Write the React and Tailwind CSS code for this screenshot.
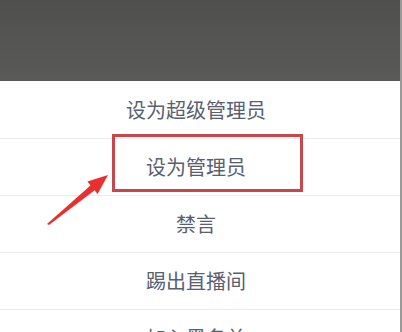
import React from 'react';

const ITEMS = ['设为超级管理员', '设为管理员', '禁言', '踢出直播间', '加入黑名单'];

export default function App() {
  return (
    <div
      className="relative w-[402px] h-[332px] overflow-hidden flex bg-[#9a9b98]"
      style={{ fontFamily: '"Noto Sans CJK SC", "Noto Sans", sans-serif' }}
    >
      <div className="w-[400px] flex flex-col">
        {/* dimmed backdrop */}
        <div className="h-[81px] shrink-0 bg-gradient-to-b from-[#4f504d] to-[#5a5b58]" />

        {/* action sheet */}
        <div className="flex-1 bg-white flex flex-col">
          {ITEMS.map((label, i) => (
            <div
              key={label}
              className={`h-[57px] shrink-0 flex items-center justify-center text-[20px] text-[#596072] ${i > 0 ? 'border-t border-[#ebebeb]' : ''}`}
            >
              <span className="-translate-x-[4px]">{label}</span>
            </div>
          ))}
        </div>
      </div>

      {/* highlight box */}
      <div className="absolute left-[112px] top-[134px] w-[191px] h-[58px] border-[3px] border-[#c9474a]" />

      {/* arrow */}
      <svg className="absolute left-0 top-0" width="402" height="332" viewBox="0 0 402 332">
        <polygon points="47,224 49,225 95,190 91,185" fill="#e8302e" />
        <polygon points="108,175 97.6,194 87.4,181.5" fill="#e8302e" />
      </svg>
    </div>
  );
}
